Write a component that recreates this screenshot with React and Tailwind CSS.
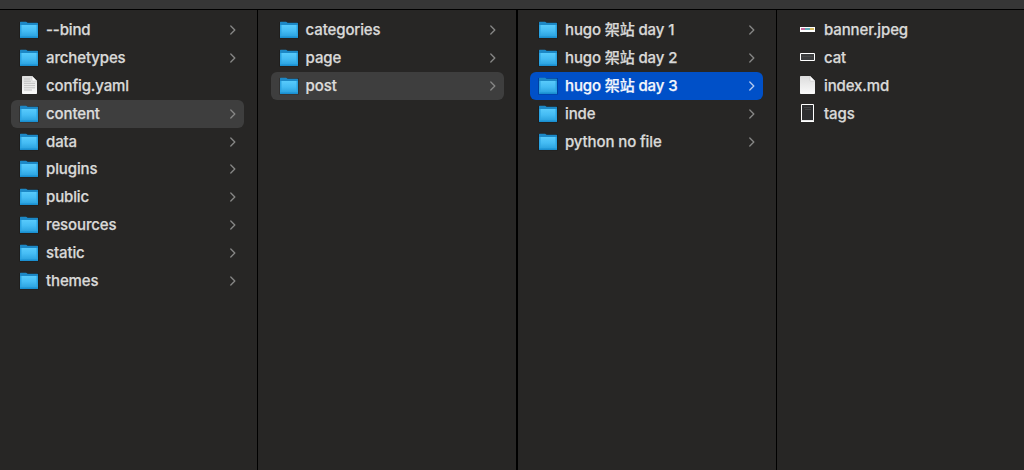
import React from "react";

function FolderIcon() {
  return (
    <svg width="20" height="18" viewBox="0 0 20 18" className="block">
      <defs>
        <linearGradient id="folderFace" x1="0" y1="0" x2="0" y2="1">
          <stop offset="0" stopColor="#58cafb" />
          <stop offset="0.5" stopColor="#45bcf4" />
          <stop offset="1" stopColor="#2ca3e0" />
        </linearGradient>
      </defs>
      <path d="M0 1h20v16.6H0z" fill="#000" opacity="0.2" />
      <path d="M1 1.2Q1 .7 1.6.7H7q.6 0 1 .5l.5.5h10q.5 0 .5.6V16H1z" fill="#1c88c6" />
      <path d="M1 4h18v12.4q0 .6-.6.6H1.6q-.6 0-.6-.6z" fill="#2ba4e3" />
      <path d="M2.5 4h15v11.5h-15z" fill="url(#folderFace)" />
      <path d="M1 15.5h18v.9q0 .6-.6.6H1.6q-.6 0-.6-.6z" fill="#1b8fd0" />
    </svg>
  );
}

function DocIcon({ lines }) {
  return (
    <svg width="20" height="20" viewBox="0 0 20 20" className="block">
      <defs>
        <linearGradient id="paper" x1="0" y1="0" x2="0" y2="1">
          <stop offset="0" stopColor="#dcdcdc" />
          <stop offset="1" stopColor="#fafafa" />
        </linearGradient>
      </defs>
      <path d="M3.6 0H13l5 5v12.3q0 .7-.7.7H3.7q-.7 0-.7-.7V.7Q3 0 3.6 0z" fill="url(#paper)" />
      <path d="M13 0l5 5h-4.2q-.8 0-.8-.8z" fill="#fff" stroke="#bcbcbc" strokeWidth="0.5" />
      {lines && (
        <path d="M5 3h6M5 5.2h7M5 7.4h11M5 9.6h11M5 11.8h11M5 14h8" stroke="#bdbdbd" strokeWidth="0.9" />
      )}
    </svg>
  );
}

function BannerIcon() {
  return (
    <svg width="20" height="20" viewBox="0 0 20 20" className="block">
      <path d="M3 7h15v5H3z" fill="#fff" />
      <path d="M4 8h4v2H4z" fill="#c96a9f" />
      <path d="M8 8h5v2H8z" fill="#62adb8" />
      <path d="M13 8h4v2h-4z" fill="#d4b95f" />
    </svg>
  );
}

function WideImageIcon() {
  return (
    <svg width="20" height="20" viewBox="0 0 20 20" className="block">
      <path d="M3.5 5.5h14v7h-14z" fill="#3c3d3f" stroke="#fff" />
      <path d="M5 8.5h11" stroke="#484949" />
    </svg>
  );
}

function TallImageIcon() {
  return (
    <svg width="20" height="20" viewBox="0 0 20 20" className="block">
      <path d="M4.5 .5h12v16.2h-12z" fill="#2d2e30" stroke="#fff" />
      <path d="M4 17.3h13" stroke="#fff" strokeWidth="1.4" />
      <path d="M7 3.5h7M8 5.5h6" stroke="#414244" />
    </svg>
  );
}

const icons = {
  folder: <FolderIcon />,
  text: <DocIcon lines />,
  doc: <DocIcon />,
  banner: <BannerIcon />,
  wide: <WideImageIcon />,
  tall: <TallImageIcon />,
};

function Row({ name, kind = "folder", state }) {
  const bg = state === "active" ? "bg-[#0050c8] text-[#f4f7fc]" : state === "path" ? "bg-[#3e3e3e] text-[#dcdcdb]" : "text-[#d9d9d8]";
  return (
    <li className={`flex h-[27.9px] items-center rounded-md pr-2 pl-2 ${bg}`}>
      <span className="flex w-5 shrink-0 justify-center">{icons[kind]}</span>
      <span className="ml-[7px] flex-1 text-[15px] leading-7 font-medium tracking-[-0.12px] whitespace-pre [-webkit-text-stroke:0.25px]">{name}</span>
      {kind === "folder" && (
        <svg width="6" height="10" viewBox="0 0 6 10" fill="none" className={state === "active" ? "text-[#b4caf0]" : "text-[#878786]"}>
          <path d="M.8 1l4 4-4 4" stroke="currentColor" strokeWidth="1.3" strokeLinecap="round" strokeLinejoin="round" />
        </svg>
      )}
    </li>
  );
}

const columns = [
  {
    box: "w-[258px] border-r pl-[11px] pr-[13px]",
    rows: [
      { name: "--bind" },
      { name: "archetypes" },
      { name: "config.yaml", kind: "text" },
      { name: "content", state: "path" },
      { name: "data" },
      { name: "plugins" },
      { name: "public" },
      { name: "resources" },
      { name: "static" },
      { name: "themes" },
    ],
  },
  {
    box: "w-[260px] border-r-2 pl-[12.6px] pr-3",
    rows: [{ name: "categories" }, { name: "page" }, { name: "post", state: "path" }],
  },
  {
    box: "w-[259px] border-r pl-3 pr-[13px]",
    rows: [
      { name: "hugo 架站 day 1" },
      { name: "hugo 架站 day 2" },
      { name: "hugo 架站 day 3", state: "active" },
      { name: "inde" },
      { name: "python no file" },
    ],
  },
  {
    box: "flex-1 pl-3",
    rows: [
      { name: "banner.jpeg", kind: "banner" },
      { name: "cat", kind: "wide" },
      { name: "index.md", kind: "doc" },
      { name: "tags", kind: "tall" },
    ],
  },
];

export default function App() {
  return (
    <div className="flex h-[470px] w-[1024px] flex-col overflow-hidden bg-[#272625] font-['Inter','Noto_Sans_CJK_TC',sans-serif]">
      <div className="h-2.5 shrink-0 border-b border-black bg-[#363636]" />
      <div className="flex flex-1">
        {columns.map((col, i) => (
          <ul key={i} className={`shrink-0 border-black pt-1.5 ${col.box}`}>
            {col.rows.map((row) => (
              <Row key={row.name} {...row} />
            ))}
          </ul>
        ))}
      </div>
    </div>
  );
}
